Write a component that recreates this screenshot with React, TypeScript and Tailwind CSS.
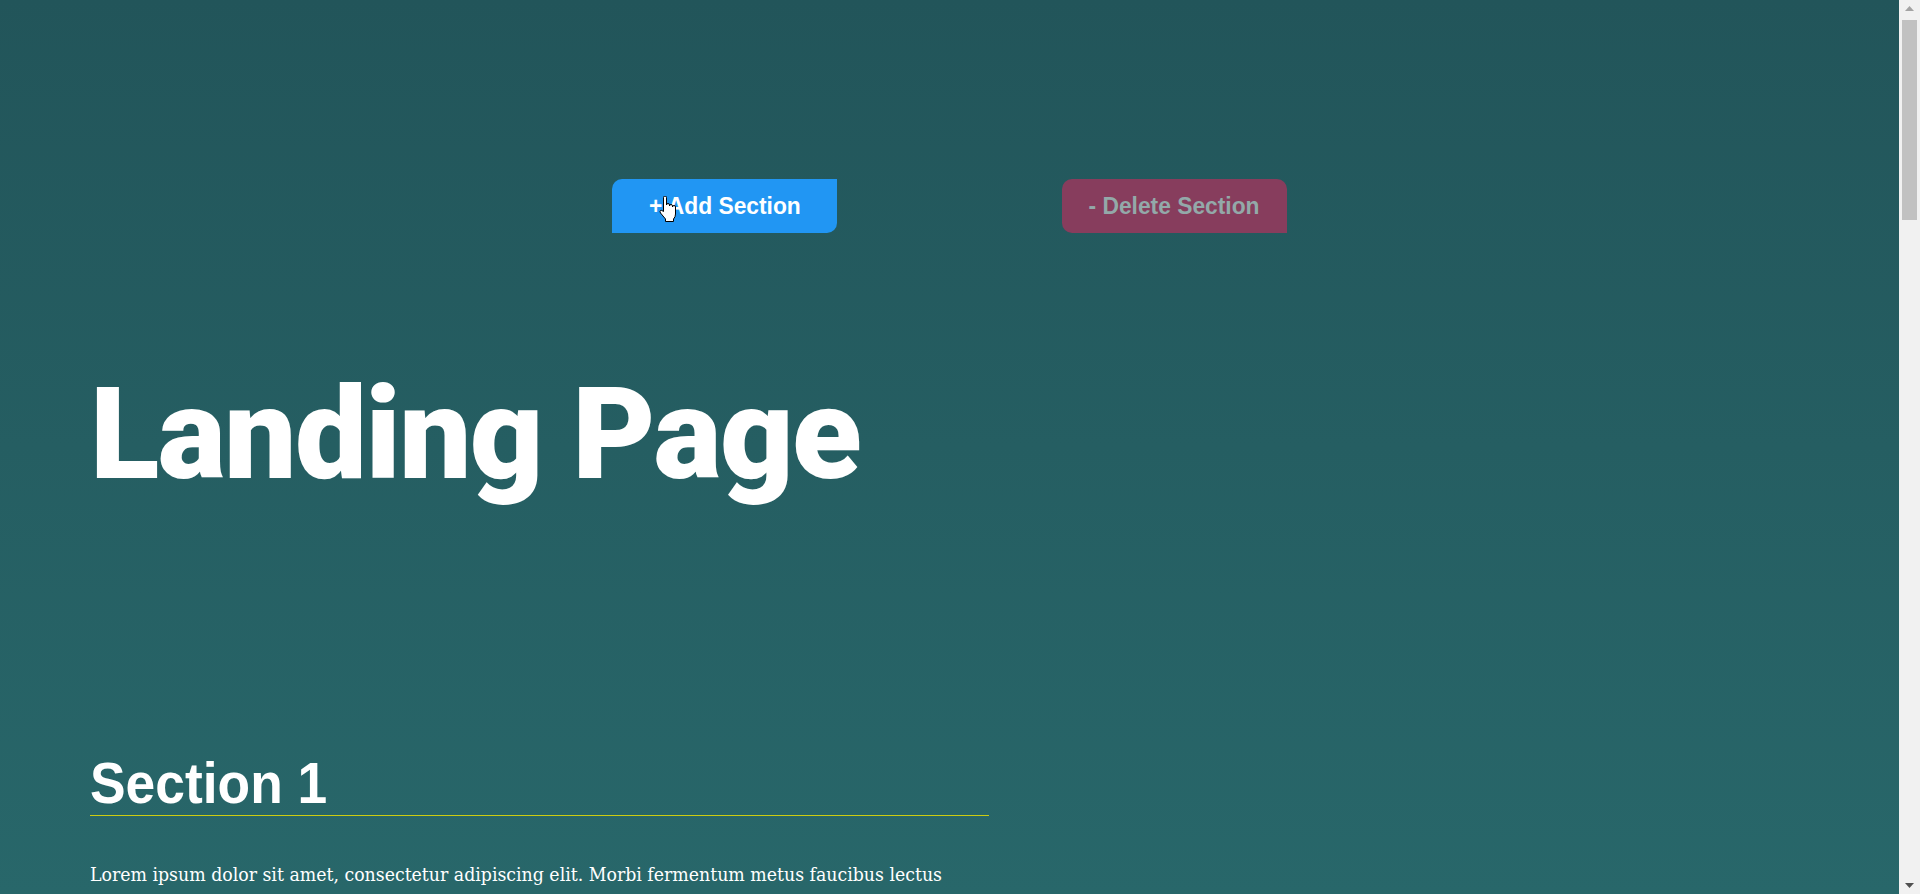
import React from "react";

const lorem =
  "Lorem ipsum dolor sit amet, consectetur adipiscing elit. Morbi fermentum metus faucibus lectus pharetra dapibus. Suspendisse potenti. Ut a est in ligula mattis tincidunt. Vivamus sit amet tortor eget ante facilisis tristique. Phasellus non erat posuere, efficitur metus ac, ultricies ipsum.";

function HandCursor() {
  return (
    <svg
      width="20"
      height="27"
      viewBox="0 0 20 27"
      className="pointer-events-none absolute left-[658px] top-[196px]"
    >
      <path
        d="M5.5 1.5a1.5 1.5 0 0 1 3 0V9a1.5 1.5 0 0 1 3 0v1a1.5 1.5 0 0 1 3 0v1a1.5 1.5 0 0 1 3 0v7Q17.5 21 15.5 23v2.5h-8V23L2.5 17Q1.5 15.5 2.5 14.5Q3.5 13.8 5.5 15.5Z"
        fill="#fff"
        stroke="#000"
        strokeWidth="1"
      />
    </svg>
  );
}

function Scrollbar() {
  return (
    <aside className="flex w-[21px] shrink-0 flex-col bg-[#f1f1f1]">
      <div className="flex h-[17px] items-center justify-center">
        <svg width="9" height="5" viewBox="0 0 9 5">
          <path d="M4.5 0L9 5H0Z" fill="#a3a3a3" />
        </svg>
      </div>
      <div className="flex-1 px-[3px] pt-[3px]">
        <div className="h-[200px] bg-[#c1c1c1]" />
      </div>
      <div className="flex h-[17px] items-center justify-center">
        <svg width="9" height="5" viewBox="0 0 9 5">
          <path d="M0 0H9L4.5 5Z" fill="#505050" />
        </svg>
      </div>
    </aside>
  );
}

function Section({ n }: { n: number }) {
  return (
    <section className="ml-[90px] w-[899px] mb-[300px]">
      <h2 className="border-b border-[#cc1] pb-[3px] font-['Liberation_Sans',Arial,sans-serif] text-[58px] font-bold leading-none">
        <span className="inline-block origin-left scale-x-[0.92]">Section {n}</span>
      </h2>
      <p className="mt-[45px] font-['DejaVu_Serif_Condensed','DejaVu_Serif',serif] text-[19.3px] leading-[28px]">
        {lorem}
      </p>
    </section>
  );
}

export default function App() {
  return (
    <div className="flex h-[894px] w-full overflow-hidden">
      <div className="relative flex-1 overflow-hidden bg-[linear-gradient(180deg,#22555a_0%,#28676a_100%)] font-['Liberation_Sans',Arial,sans-serif] text-white">
        <header className="flex justify-center gap-[225px] pt-[179px]">
          <button className="h-[54px] w-[225px] rounded-tl-[10px] rounded-br-[10px] bg-[#2196f3] text-[24px] font-bold text-white">
            <span className="inline-block scale-x-[0.95]">+ Add Section</span>
          </button>
          <button className="h-[54px] w-[225px] rounded-tl-[10px] rounded-tr-[10px] rounded-bl-[10px] bg-[#873d5d] text-[24px] font-bold text-[#93a9a9]">
            <span className="inline-block scale-x-[0.95]">- Delete Section</span>
          </button>
        </header>
        <HandCursor />

        <main>
          <h1 className="ml-[90px] mt-[137px] font-['Roboto',sans-serif] text-[128px] font-black leading-none tracking-[-0.012em]">
            Landing Page
          </h1>
          <div className="h-[256px]" />
          <Section n={1} />
          <Section n={2} />
        </main>
      </div>
      <Scrollbar />
    </div>
  );
}
